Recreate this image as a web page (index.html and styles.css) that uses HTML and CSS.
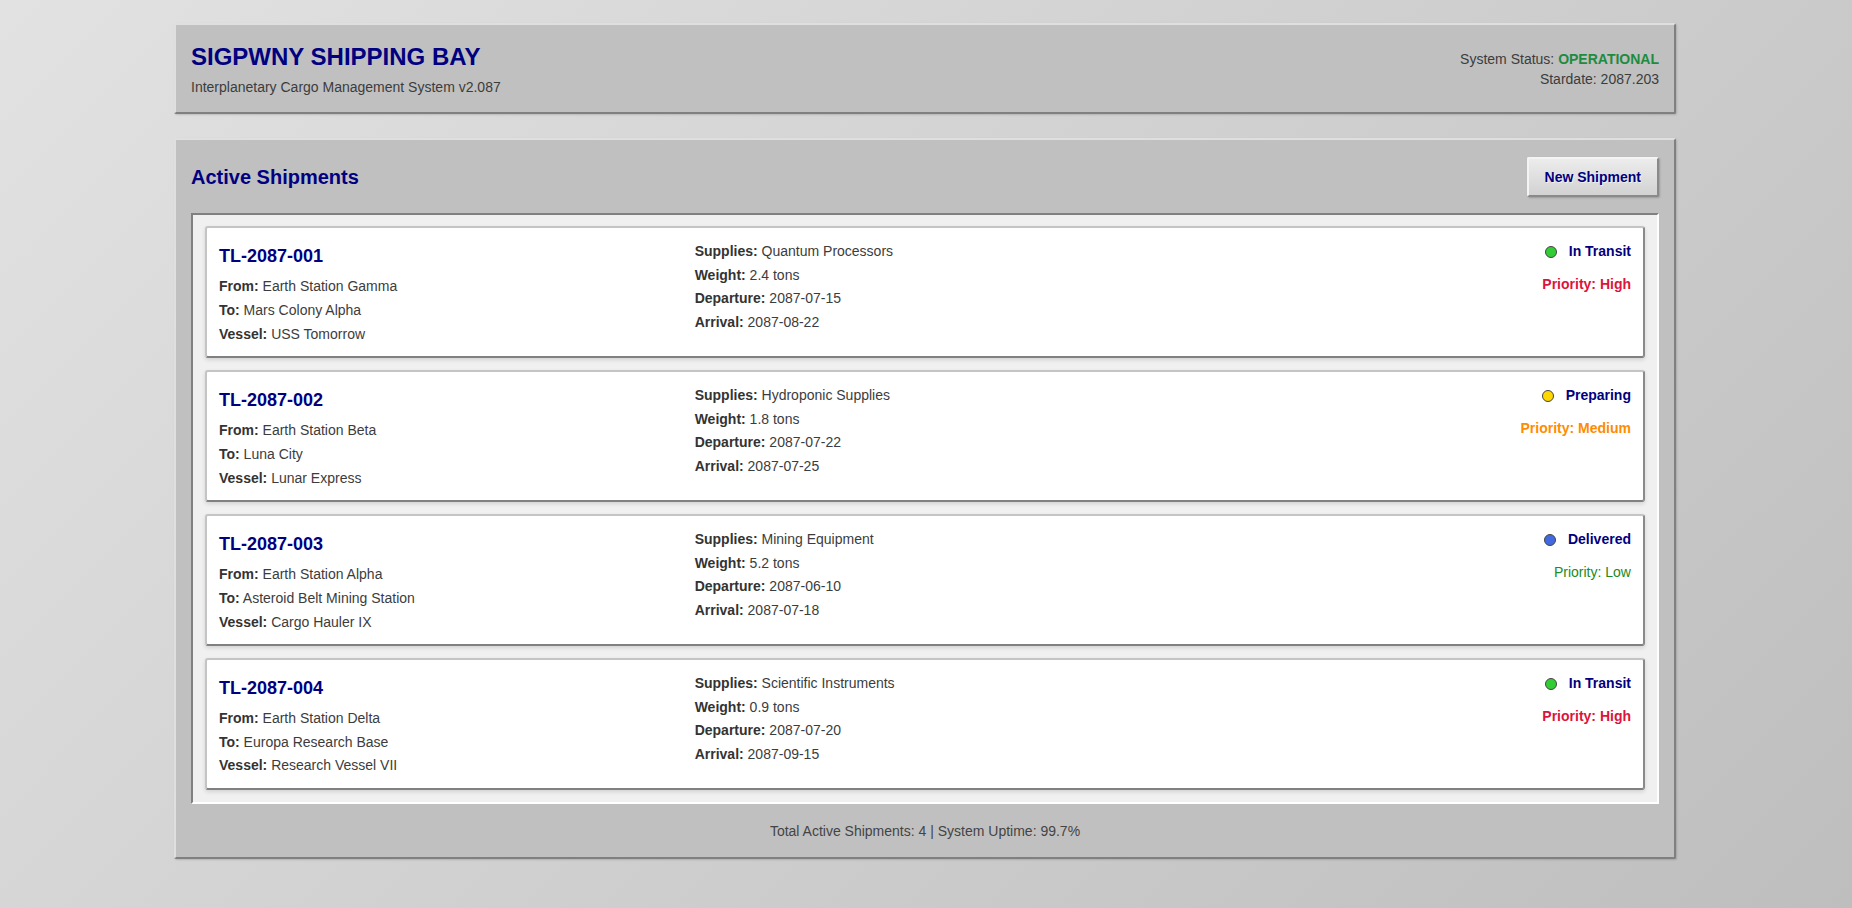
FILE: index.html
```html
<!DOCTYPE html>
<html lang="en">
<head>
<meta charset="utf-8">
<title>SIGPWNY Shipping Bay</title>
<link rel="stylesheet" href="styles.css">
</head>
<body>
<div class="container">
  <header class="panel header">
    <div class="brand">
      <h1 class="title">SIGPWNY SHIPPING BAY</h1>
      <p class="subtitle">Interplanetary Cargo Management System v2.087</p>
    </div>
    <div class="sys">
      <div>System Status: <span class="ok">OPERATIONAL</span></div>
      <div>Stardate: 2087.203</div>
    </div>
  </header>

  <main class="panel main">
    <div class="main-head">
      <h2 class="section-title">Active Shipments</h2>
      <button class="btn" type="button">New Shipment</button>
    </div>

    <div class="list">
      <div class="card">
        <div class="col">
          <h3 class="ship-id">TL-2087-001</h3>
          <div class="line"><b>From:</b> Earth Station Gamma</div>
          <div class="line"><b>To:</b> Mars Colony Alpha</div>
          <div class="line"><b>Vessel:</b> USS Tomorrow</div>
        </div>
        <div class="col">
          <div class="line"><b>Supplies:</b> Quantum Processors</div>
          <div class="line"><b>Weight:</b> 2.4 tons</div>
          <div class="line"><b>Departure:</b> 2087-07-15</div>
          <div class="line"><b>Arrival:</b> 2087-08-22</div>
        </div>
        <div class="col right">
          <div class="status"><span class="dot dot-transit"></span><span class="status-text">In Transit</span></div>
          <div class="prio prio-high">Priority: High</div>
        </div>
      </div>

      <div class="card">
        <div class="col">
          <h3 class="ship-id">TL-2087-002</h3>
          <div class="line"><b>From:</b> Earth Station Beta</div>
          <div class="line"><b>To:</b> Luna City</div>
          <div class="line"><b>Vessel:</b> Lunar Express</div>
        </div>
        <div class="col">
          <div class="line"><b>Supplies:</b> Hydroponic Supplies</div>
          <div class="line"><b>Weight:</b> 1.8 tons</div>
          <div class="line"><b>Departure:</b> 2087-07-22</div>
          <div class="line"><b>Arrival:</b> 2087-07-25</div>
        </div>
        <div class="col right">
          <div class="status"><span class="dot dot-preparing"></span><span class="status-text">Preparing</span></div>
          <div class="prio prio-medium">Priority: Medium</div>
        </div>
      </div>

      <div class="card">
        <div class="col">
          <h3 class="ship-id">TL-2087-003</h3>
          <div class="line"><b>From:</b> Earth Station Alpha</div>
          <div class="line"><b>To:</b> Asteroid Belt Mining Station</div>
          <div class="line"><b>Vessel:</b> Cargo Hauler IX</div>
        </div>
        <div class="col">
          <div class="line"><b>Supplies:</b> Mining Equipment</div>
          <div class="line"><b>Weight:</b> 5.2 tons</div>
          <div class="line"><b>Departure:</b> 2087-06-10</div>
          <div class="line"><b>Arrival:</b> 2087-07-18</div>
        </div>
        <div class="col right">
          <div class="status"><span class="dot dot-delivered"></span><span class="status-text">Delivered</span></div>
          <div class="prio prio-low">Priority: Low</div>
        </div>
      </div>

      <div class="card">
        <div class="col">
          <h3 class="ship-id">TL-2087-004</h3>
          <div class="line"><b>From:</b> Earth Station Delta</div>
          <div class="line"><b>To:</b> Europa Research Base</div>
          <div class="line"><b>Vessel:</b> Research Vessel VII</div>
        </div>
        <div class="col">
          <div class="line"><b>Supplies:</b> Scientific Instruments</div>
          <div class="line"><b>Weight:</b> 0.9 tons</div>
          <div class="line"><b>Departure:</b> 2087-07-20</div>
          <div class="line"><b>Arrival:</b> 2087-09-15</div>
        </div>
        <div class="col right">
          <div class="status"><span class="dot dot-transit"></span><span class="status-text">In Transit</span></div>
          <div class="prio prio-high">Priority: High</div>
        </div>
      </div>
    </div>

    <div class="footer">Total Active Shipments: 4 | System Uptime: 99.7%</div>
  </main>
</div>
</body>
</html>
```

FILE: styles.css
```css
* { box-sizing: border-box; }

html, body { height: 100%; }

body {
  margin: 0;
  padding: 23px 22px 23px 20px;
  min-height: 100vh;
  font-family: "Liberation Sans", Arial, sans-serif;
  font-size: 14px;
  line-height: 1.4;
  color: #3c3c3c;
  background: linear-gradient(135deg, #e2e2e2 0%, #bebebe 100%);
  background-attachment: fixed;
}

.container {
  max-width: 1502px;
  margin: 0 auto;
}

.panel {
  background: #c0c0c0;
  border: 2px solid;
  border-color: #dfdfdf #808080 #808080 #dfdfdf;
  border-radius: 2px;
  box-shadow: 1px 1px 2px rgba(0, 0, 0, 0.15);
  padding: 15px;
}

.header {
  display: flex;
  justify-content: space-between;
  align-items: center;
  margin-bottom: 24px;
}

.title {
  margin: 0 0 4px;
  font-size: 24px;
  line-height: 1.4;
  font-weight: bold;
  color: #000080;
}

.subtitle {
  margin: 0;
}

.sys {
  text-align: right;
  padding-top: 2px;
}

.ok {
  color: #1e8b3e;
  font-weight: bold;
}

.main-head {
  display: flex;
  justify-content: space-between;
  align-items: center;
  margin: 2px 0 16px;
}

.section-title {
  margin: 0;
  font-size: 20px;
  line-height: 1.4;
  color: #000080;
}

.btn {
  font-family: "Liberation Sans", Arial, sans-serif;
  font-size: 14px;
  font-weight: bold;
  line-height: 16px;
  color: #000080;
  padding: 10px 16px;
  border: 2px solid;
  border-color: #f4f4f4 #8a8a8a #8a8a8a #f4f4f4;
  border-radius: 2px;
  background: linear-gradient(to bottom, #ececec, #d2d2d2);
  text-shadow: 1px 1px 0 rgba(255, 255, 255, 0.6);
  box-shadow: 1px 1px 2px rgba(0, 0, 0, 0.2);
  cursor: pointer;
}

.list {
  background: #f0f0f0;
  border: 2px solid;
  border-color: #808080 #ffffff #ffffff #808080;
  padding: 11px 12px 12px;
  display: flex;
  flex-direction: column;
  gap: 12px;
}

.card {
  background: #ffffff;
  border: 2px solid;
  border-color: #c4c4c4 #8a8a8a #808080 #c4c4c4;
  border-radius: 3px;
  box-shadow: 0 2px 4px rgba(0, 0, 0, 0.12);
  padding: 14px 12px 12px;
  display: grid;
  grid-template-columns: 1fr 1fr 1fr;
  gap: 15px;
}

.col {
  display: flex;
  flex-direction: column;
  gap: 4px;
}

.col.right {
  align-items: flex-end;
  gap: 0;
}

.ship-id {
  margin: 2px 0 4px;
  font-size: 18px;
  line-height: 1.4;
  color: #000080;
}

.line b {
  color: #333;
}

.status {
  display: flex;
  align-items: center;
  gap: 12px;
  margin-bottom: 13px;
}

.dot {
  width: 12px;
  height: 12px;
  border-radius: 50%;
  border: 1px solid #444;
  display: inline-block;
}

.dot-transit { background: #32cd32; }
.dot-preparing { background: #ffd700; }
.dot-delivered { background: #4169e1; }

.status-text {
  font-weight: bold;
  color: #000080;
}

.prio-high { color: #dc143c; font-weight: bold; }
.prio-medium { color: #ff8c00; font-weight: bold; }
.prio-low { color: #228b22; }

.footer {
  margin-top: 18px;
  text-align: center;
  color: #444;
}
```
